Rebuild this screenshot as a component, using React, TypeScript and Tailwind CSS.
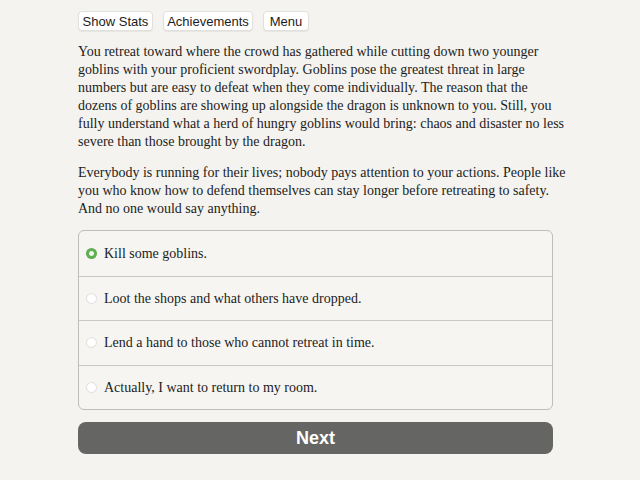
import { useState } from 'react';

const choices = [
  'Kill some goblins.',
  'Loot the shops and what others have dropped.',
  'Lend a hand to those who cannot retreat in time.',
  'Actually, I want to return to my room.',
];

const para1 = [
  'You retreat toward where the crowd has gathered while cutting down two younger',
  'goblins with your proficient swordplay. Goblins pose the greatest threat in large',
  'numbers but are easy to defeat when they come individually. The reason that the',
  'dozens of goblins are showing up alongside the dragon is unknown to you. Still, you',
  'fully understand what a herd of hungry goblins would bring: chaos and disaster no less',
  'severe than those brought by the dragon.',
];

const para2 = [
  'Everybody is running for their lives; nobody pays attention to your actions. People like',
  'you who know how to defend themselves can stay longer before retreating to safety.',
  'And no one would say anything.',
];

export default function App() {
  const [selected, setSelected] = useState(0);

  return (
    <div className="min-h-[480px] w-full bg-[#f4f3ef] text-[#1c1c1c]">
      <div className="ml-[78px] w-[475px] pt-[11px]">
        <div className="flex gap-[10px] font-['Liberation_Sans',sans-serif] text-[13px]">
          <button className="h-[20px] w-[75px] rounded-[4px] border border-[#e0e0dc] bg-white leading-none shadow-[0_1px_1px_rgba(0,0,0,0.06)]">
            Show Stats
          </button>
          <button className="h-[20px] w-[90px] rounded-[4px] border border-[#e0e0dc] bg-white leading-none shadow-[0_1px_1px_rgba(0,0,0,0.06)]">
            Achievements
          </button>
          <button className="h-[20px] w-[46px] rounded-[4px] border border-[#e0e0dc] bg-white leading-none shadow-[0_1px_1px_rgba(0,0,0,0.06)]">
            Menu
          </button>
        </div>

        <div className="mt-[12px] whitespace-nowrap font-['Liberation_Serif',serif] text-[14px] leading-[18px]">
          <p>
            {para1.map((l) => (
              <span key={l} className="block">{l}</span>
            ))}
          </p>
          <p className="mt-[13px]">
            {para2.map((l) => (
              <span key={l} className="block">{l}</span>
            ))}
          </p>
        </div>

        <div className="mt-[12px] overflow-hidden rounded-[6px] border border-[#bdbdb9] bg-[#f6f5f2] font-['Liberation_Serif',serif] text-[14px]">
          {choices.map((c, i) => (
            <label
              key={c}
              onClick={() => setSelected(i)}
              className={`flex h-[44.5px] cursor-pointer items-center gap-[7px] pl-[7px] ${
                i > 0 ? 'border-t border-[#c9c9c5]' : ''
              }`}
            >
              <span
                className={`flex h-[11px] w-[11px] items-center justify-center rounded-full ${
                  selected === i ? 'bg-[#5fae52]' : 'border border-[#dededa] bg-white'
                }`}
              >
                {selected === i && <span className="h-[5px] w-[5px] rounded-full bg-[#eef5ec]" />}
              </span>
              <span>{c}</span>
            </label>
          ))}
        </div>

        <button className="mt-[12px] h-[32px] w-full rounded-[8px] bg-[#656563] font-['Liberation_Sans',sans-serif] text-[18px] font-bold text-white">
          Next
        </button>
      </div>
    </div>
  );
}
